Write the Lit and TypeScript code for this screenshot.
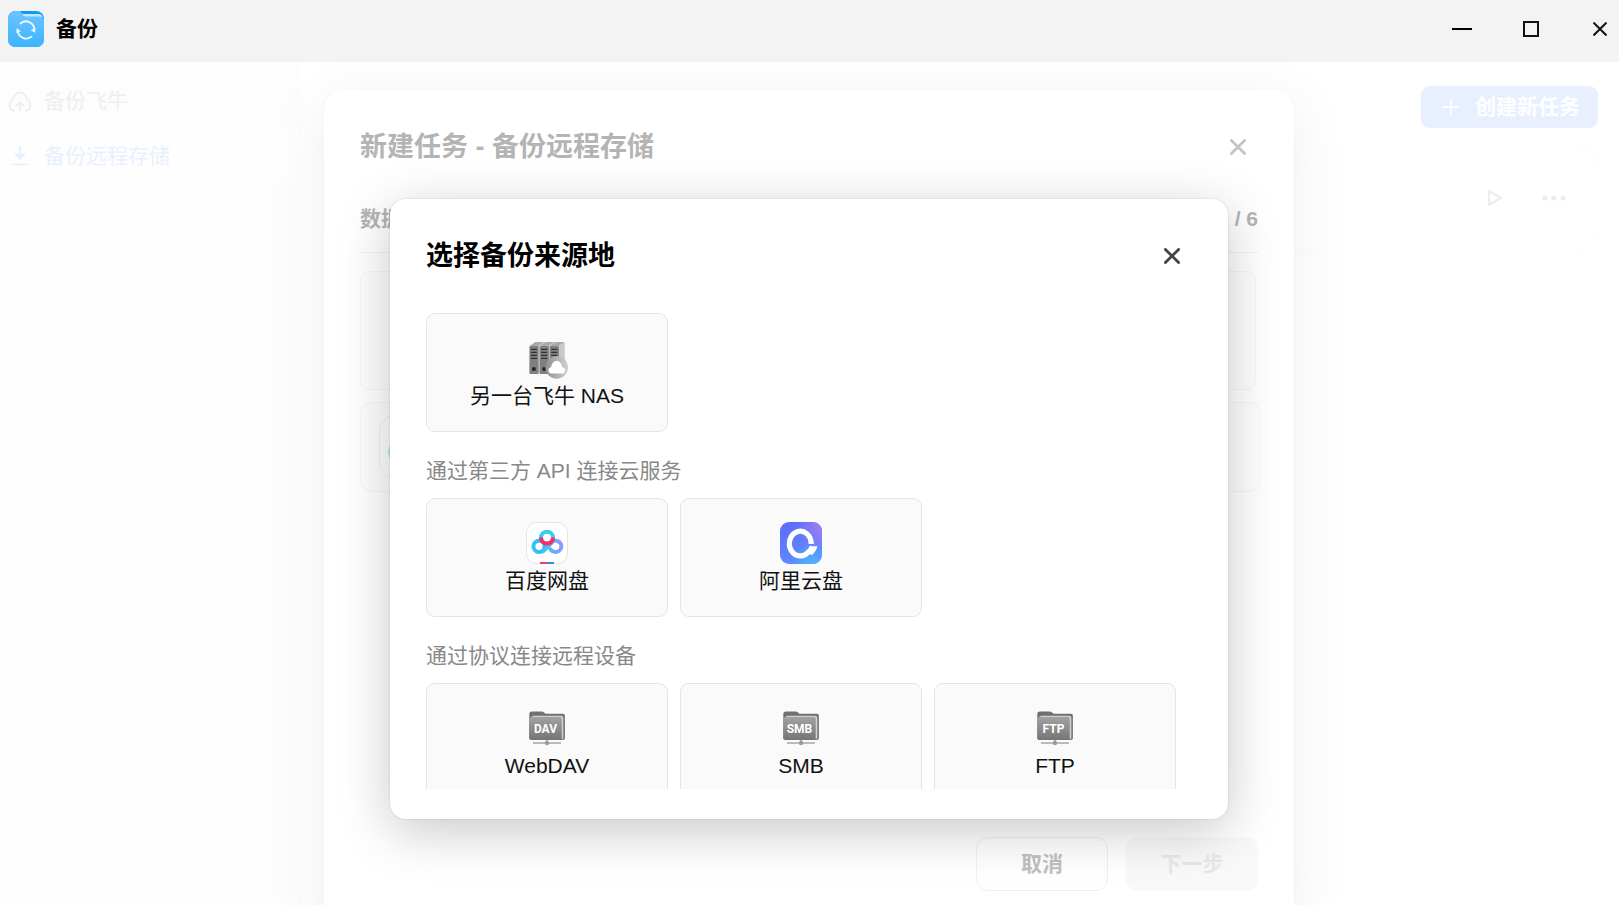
import { LitElement, html, svg, css } from "lit";
import { customElement, property } from "lit/decorators.js";

const closeIcon = html`<svg viewBox="0 0 16 16" width="16" height="16" aria-hidden="true">
  <path d="M1.4 1.4 14.6 14.6M14.6 1.4 1.4 14.6" fill="none" stroke="currentColor" stroke-width="2.8" stroke-linecap="round" />
</svg>`;

const nasServer = (x: number) => svg`
  <path d="M${x} 9 L${x + 6} 5 H${x + 15} L${x + 9} 9Z" fill="#a9a9a9" />
  <path d="M${x + 9} 9 L${x + 15} 5 V33 L${x + 9} 37Z" fill="#c9c9c9" />
  <rect x=${x} y="9" width="9.2" height="28" rx="1" fill="#808080" />
  <path d="M${x + 1.5} 12.4h6M${x + 1.5} 15.4h6M${x + 1.5} 18.4h6M${x + 1.5} 21.4h6" stroke="#303030" stroke-width="1.4" />
  <circle cx=${x + 4.5} cy="32" r="2" fill="#222" />`;

const nasIcon = html`<svg viewBox="0 0 42 42" width="42" height="42" aria-hidden="true">
  <defs>
    <linearGradient id="ring" x1="0" x2="1"><stop stop-color="#8e8e8e" /><stop offset="1" stop-color="#d2d2d2" /></linearGradient>
  </defs>
  ${nasServer(3.4)}${nasServer(13.7)}${nasServer(23.8)}
  <circle cx="30.7" cy="30.3" r="11.4" fill="url(#ring)" />
  <path d="M26 36.6c-2.300 0-3.600-1.500-3.600-3.400 0-1.800 1.200-3 2.900-3.300.3-3.400 2.500-5.800 5.400-5.800s5.100 2.400 5.300 5.800c1.800.3 3 1.500 3 3.300 0 1.900-1.400 3.400-3.600 3.400z" fill="#fff" />
</svg>`;

const folderIcon = (name: string) => html`<svg viewBox="0 0 42 42" width="42" height="42" aria-hidden="true">
  <defs>
    <linearGradient id="front" x1="0" y1="0" x2="0" y2="1"><stop stop-color="#a2a2a2" /><stop offset="1" stop-color="#757575" /></linearGradient>
  </defs>
  <path d="M3.300 7q0-2.600 2.600-2.600h9.600q1.500 0 2.500 1l1.600 1.400h17.300q2 0 2 2V31q0 2-2 2H5.300q-2 0-2-2z" fill="#707070" />
  <path d="M5.600 10.500q0-1.800 1.800-1.800h27.800q2.200 0 2.200 2.200V30q0 2-1.500 2.500z" fill="#cfcfcf" />
  <path d="M3.300 12q0-2 2-2h28.600q1.800 0 1.800 2v20.800H5.300q-2 0-2-2z" fill="url(#front)" />
  <path d="M7 36h28M21 33v5" stroke="#a6a6a6" stroke-width="1.700" fill="none" />
  <circle cx="21" cy="36" r="2.200" fill="#9b9b9b" />
  <text class="tag" x="19.500" y="26" text-anchor="middle">${name}</text>
</svg>`;

const baiduIcon = html`<svg viewBox="0 0 42 42" width="42" height="42" aria-hidden="true">
  <defs>
    <linearGradient id="left" x1="0" x2="1"><stop stop-color="#2cc6fb" /><stop offset="1" stop-color="#35b4f8" /></linearGradient>
    <linearGradient id="right" x1="0" x2="1"><stop stop-color="#36c7f2" /><stop offset="1" stop-color="#8c9bff" /></linearGradient>
  </defs>
  <rect x="0.500" y="0.500" width="41" height="41" rx="10" fill="#fff" stroke="#e4e4e4" />
  <circle cx="13" cy="24.300" r="5.600" fill="none" stroke="url(#left)" stroke-width="4" />
  <path d="M24.500 27.400q2 2.600 5 2.500a5.600 5.600 0 1 0-4.600-8.400L17 29.400" fill="none" stroke="url(#right)" stroke-width="4" stroke-linecap="round" stroke-linejoin="round" />
  <circle cx="21" cy="15.700" r="6" fill="none" stroke="#38ccf6" stroke-width="4" />
  <path d="M15 15.500a6 6 0 0 0 12 0" fill="none" stroke="#fb2b68" stroke-width="4" />
  <path d="M14 41h8" stroke="#ff3569" stroke-width="2" /><path d="M21 41h7" stroke="#2b8cff" stroke-width="2" />
</svg>`;

const aliIcon = html`<svg viewBox="0 0 42 42" width="42" height="42" aria-hidden="true">
  <defs>
    <linearGradient id="base" x1="0" y1="0" x2="0.400" y2="1"><stop stop-color="#5f69f8" /><stop offset="1" stop-color="#5e8cff" /></linearGradient>
    <radialGradient id="violet" cx="1" cy="0.100" r="0.600"><stop stop-color="#a57cf0" /><stop offset="1" stop-color="#a57cf0" stop-opacity="0" /></radialGradient>
    <radialGradient id="sky" cx="0.750" cy="1" r="0.500"><stop stop-color="#4fb2ff" /><stop offset="1" stop-color="#4fb2ff" stop-opacity="0" /></radialGradient>
  </defs>
  <rect width="42" height="42" rx="9" fill="url(#base)" />
  <rect width="42" height="42" rx="9" fill="url(#violet)" />
  <rect width="42" height="42" rx="9" fill="url(#sky)" />
  <path d="M31.200 22A10.900 12.300 0 1 0 29 29" fill="none" stroke="#fff" stroke-width="5.200" />
  <path d="M29.500 23.800L32.500 24.200 37.300 24.200C36.600 28 34.500 31 31.400 33.200L26.500 28.500C28 27.300 29 25.800 29.500 23.800Z" fill="#fff" />
</svg>`;

const logoIcon = html`<svg viewBox="0 0 36 36" width="36" height="36" aria-hidden="true">
  <defs>
    <linearGradient id="logo" x1="0" y1="0" x2="0" y2="1"><stop stop-color="#6cc4ff" /><stop offset="1" stop-color="#3cb4fd" /></linearGradient>
  </defs>
  <rect width="36" height="36" rx="8" fill="#0a9bff" />
  <path d="M14 3h17q2.500 0 3.500 3v2H16z" fill="#c4e8ff" />
  <path d="M0 8q0-8 8-8h3q2 0 3 2 1 3.500 4 3.500h13q5 0 5 5V28q0 8-8 8H8q-8 0-8-8z" fill="url(#logo)" />
  <path d="M12.500 12.400a8.400 8.400 0 0 1 13.800 5.800M23.300 25.800A8.400 8.400 0 0 1 9.800 20" fill="none" stroke="#e8f7ff" stroke-width="1.900" stroke-linecap="round" />
  <path d="M22.600 19.300l4.600 2.400.2-4.800zM13 20.300l-4.200-3.200-.6 4.800z" fill="#e8f7ff" />
</svg>`;

@customElement("source-card")
export class SourceCard extends LitElement {
  @property() label = "";
  @property() kind = "";

  static styles = css`
    :host { display: block; }
    .card {
      width: 100%;
      display: flex;
      flex-direction: column;
      align-items: center;
      gap: 1px;
      box-sizing: border-box;
      padding: 23px 8px 20px;
      border: 1px solid #e5e5e5;
      border-radius: 9px;
      background: #fafafa;
      color: #111;
      font: 400 21px/31px "Liberation Sans", "Noto Sans CJK SC", sans-serif;
      cursor: pointer;
    }
    .card:hover { background: #f5f5f5; }
    svg { display: block; }
    .tag {
      font: 700 12px "Liberation Sans Narrow", "Roboto", sans-serif;
      fill: #fff;
    }
  `;

  private icon() {
    switch (this.kind) {
      case "nas": return nasIcon;
      case "baidu": return baiduIcon;
      case "ali": return aliIcon;
      default: return folderIcon(this.kind);
    }
  }

  render() {
    return html`<button class="card" type="button">${this.icon()}<span>${this.label}</span></button>`;
  }
}

const groups = [
  { title: "", items: [{ label: "另一台飞牛 NAS", kind: "nas" }] },
  {
    title: "通过第三方 API 连接云服务",
    items: [{ label: "百度网盘", kind: "baidu" }, { label: "阿里云盘", kind: "ali" }],
  },
  {
    title: "通过协议连接远程设备",
    items: [{ label: "WebDAV", kind: "DAV" }, { label: "SMB", kind: "SMB" }, { label: "FTP", kind: "FTP" }],
  },
];

@customElement("app-root")
export class AppRoot extends LitElement {
  static styles = css`
    :host {
      display: flex;
      flex-direction: column;
      height: 100vh;
      overflow: hidden;
      background: #fff;
      color: #000;
      font: 400 21px/32px "Liberation Sans", "Noto Sans CJK SC", sans-serif;
    }
    h1, h2, h3 { margin: 0; }
    button { font: inherit; color: inherit; border: 0; background: none; padding: 0; cursor: pointer; }
    svg { display: block; }

    .titlebar {
      display: flex;
      align-items: center;
      gap: 12px;
      height: 62px;
      padding: 0 7px 4px 8px;
      box-sizing: border-box;
      background: #f3f3f3;
    }
    .titlebar h1 { flex: 1; font-size: 21px; font-weight: 700; }
    .controls { display: flex; gap: 45px; }
    .controls button { width: 24px; height: 24px; display: grid; place-items: center; }

    .workspace { position: relative; flex: 1; min-height: 0; display: flex; overflow: hidden; }
    .sidebar {
      flex: 0 0 302px;
      display: flex;
      flex-direction: column;
      gap: 1px;
      padding-top: 12px;
      background: #fdfdfd;
      box-sizing: border-box;
    }
    .link {
      display: flex;
      align-items: center;
      gap: 12px;
      height: 54px;
      padding-left: 8px;
      border-radius: 0 9px 9px 0;
      color: #eee;
      text-decoration: none;
    }
    .link.active { color: #e8f0ff; background: #fefefe; }
    .content { flex: 1; padding: 24px 21px 0; }
    .toolbar { display: flex; justify-content: flex-end; }
    .create {
      display: flex;
      align-items: center;
      gap: 16px;
      height: 42px;
      padding: 0 18px 0 22px;
      border-radius: 9px;
      background: #e8f0ff;
      color: #fff;
      font-weight: 700;
    }
    .task {
      display: flex;
      align-items: center;
      justify-content: flex-end;
      gap: 39px;
      height: 104px;
      margin-top: 18px;
      padding-right: 31px;
      box-sizing: border-box;
      border: 1px solid #fdfdfd;
      border-radius: 18px;
      color: #ededed;
    }

    .layer {
      position: absolute;
      inset: 0;
      display: flex;
      justify-content: center;
      align-items: flex-start;
      padding-right: 1px;
    }
    .wizard-layer { padding-top: 28px; }
    .picker-layer { padding-top: 137px; }
    .head { display: flex; align-items: center; justify-content: space-between; }
    .head h2 { font-size: 27px; line-height: 40px; font-weight: 700; }
    .head button { width: 40px; height: 40px; display: grid; place-items: center; }

    .wizard {
      display: flex;
      flex-direction: column;
      width: 970px;
      max-width: 94%;
      height: 837px;
      padding: 37px 36px 36px;
      box-sizing: border-box;
      border-radius: 18px;
      background: #fff;
      color: #b4b4b4;
      box-shadow: 0 0 1px rgba(0, 0, 0, 0.1), 0 12px 60px rgba(0, 0, 0, 0.07);
    }
    .wizard .head button { color: #c4c4c4; }
    .step {
      display: flex;
      justify-content: space-between;
      margin-top: 36px;
      padding-bottom: 17px;
      border-bottom: 1px solid #f2f2f2;
      font-weight: 700;
    }
    .panels { flex: 1; margin: 18px -3px 0 0; }
    .panel { height: 119px; margin-right: 5px; box-sizing: border-box; border: 1px solid #f6f6f6; border-radius: 9px; background: #fefefe; }
    .account {
      display: flex;
      align-items: center;
      height: 90px;
      margin-top: 12px;
      padding-left: 18px;
      box-sizing: border-box;
      border: 1px solid #f6f6f6;
      border-radius: 12px;
      background: #fefefe;
    }
    .avatar {
      width: 64px;
      height: 64px;
      box-sizing: border-box;
      border: 1px solid #f2f2f2;
      border-radius: 16px;
      display: grid;
      place-items: center;
    }
    .actions { display: flex; justify-content: flex-end; gap: 18px; }
    .actions button { width: 132px; height: 54px; border-radius: 12px; font-weight: 700; }
    .actions .cancel { border: 1px solid #efefef; color: #c0c0c0; }
    .actions .next { background: #f9f9f9; color: #e8e8e8; }

    .picker {
      display: flex;
      flex-direction: column;
      width: 838px;
      max-width: 90%;
      height: 620px;
      padding-bottom: 30px;
      box-sizing: border-box;
      border-radius: 16px;
      background: #fff;
      box-shadow: 0 0 1px 1px rgba(0, 0, 0, 0.05), 0 12px 52px rgba(0, 0, 0, 0.22);
    }
    .picker .head { padding: 37px 36px; }
    .picker .head button { color: #444; }
    .sources { flex: 1; min-height: 0; overflow: hidden; padding: 0 52px 0 36px; }
    .group-title { margin: 25px 0 13px; font-size: 21px; line-height: 28px; font-weight: 400; color: #888; }
    .grid { display: grid; grid-template-columns: repeat(3, 1fr); gap: 12px; }
  `;

  render() {
    return html`
      <header class="titlebar">
        ${logoIcon}
        <h1>备份</h1>
        <div class="controls">
          <button type="button" aria-label="最小化">
            <svg width="20" height="20" viewBox="0 0 20 20"><path d="M0 10h20" stroke="#000" stroke-width="2" /></svg>
          </button>
          <button type="button" aria-label="最大化">
            <svg width="16" height="16" viewBox="0 0 16 16"><rect x="1" y="1" width="14" height="14" fill="none" stroke="#111" stroke-width="2" /></svg>
          </button>
          <button type="button" aria-label="关闭">
            <svg width="14" height="14" viewBox="0 0 14 14"><path d="M.5.500 13.500 13.500M13.500.500.500 13.500" stroke="#111" stroke-width="2" /></svg>
          </button>
        </div>
      </header>
      <main class="workspace">
        <nav class="sidebar">
          <a class="link" href="#local">
            <svg width="24" height="24" viewBox="0 0 24 24" fill="none" stroke="currentColor" stroke-width="2" stroke-linecap="round" stroke-linejoin="round">
              <path d="M6 21.500C3 21 1.500 18.700 1.500 16.200c0-2.400 1.400-4.400 3.500-5.200C5.300 6.600 8 3.500 12 3.500s6.700 3.100 7 7.500c2.100.8 3.500 2.800 3.500 5.200 0 2.500-1.500 4.800-4.500 5.300M12 21.500v-8M8.300 16.800l3.700-3.500 3.700 3.500" />
            </svg>
            <span>备份飞牛</span>
          </a>
          <a class="link active" href="#remote">
            <svg width="24" height="24" viewBox="0 0 24 24">
              <path d="M12 2v11M4 20.500h16" fill="none" stroke="currentColor" stroke-width="2" />
              <path d="M5.500 9.500h13L12 16.500z" fill="currentColor" />
            </svg>
            <span>备份远程存储</span>
          </a>
        </nav>
        <section class="content">
          <div class="toolbar">
            <button class="create" type="button">
              <svg width="16" height="16" viewBox="0 0 16 16"><path d="M8 0v16M0 8h16" stroke="#fff" stroke-width="1.800" /></svg>
              <span>创建新任务</span>
            </button>
          </div>
          <div class="task">
            <button type="button" aria-label="开始">
              <svg width="16" height="18" viewBox="0 0 16 18"><path d="M2.200 2v14L13.800 9z" fill="none" stroke="currentColor" stroke-width="2.200" stroke-linejoin="round" /></svg>
            </button>
            <button type="button" aria-label="更多">
              <svg width="24" height="6" viewBox="0 0 24 6" fill="currentColor"><circle cx="3" cy="3" r="2.600" /><circle cx="12" cy="3" r="2.600" /><circle cx="21" cy="3" r="2.600" /></svg>
            </button>
          </div>
        </section>

        <div class="layer wizard-layer">
          <section class="wizard">
            <div class="head">
              <h2>新建任务 - 备份远程存储</h2>
              <button type="button" aria-label="关闭">${closeIcon}</button>
            </div>
            <div class="step"><span>数据</span><span>/ 6</span></div>
            <div class="panels">
              <div class="panel"></div>
              <div class="account">
                <div class="avatar">
                  <svg width="46" height="46" viewBox="0 0 46 46"><circle cx="11" cy="28" r="7" fill="none" stroke="#b5eaf2" stroke-width="8" /></svg>
                </div>
              </div>
            </div>
            <div class="actions">
              <button class="cancel" type="button">取消</button>
              <button class="next" type="button">下一步</button>
            </div>
          </section>
        </div>

        <div class="layer picker-layer">
          <section class="picker" role="dialog" aria-labelledby="picker-title">
            <div class="head">
              <h2 id="picker-title">选择备份来源地</h2>
              <button type="button" aria-label="关闭">${closeIcon}</button>
            </div>
            <div class="sources">
              ${groups.map((g) => html`
                ${g.title ? html`<h3 class="group-title">${g.title}</h3>` : ""}
                <div class="grid">
                  ${g.items.map((i) => html`<source-card .label=${i.label} .kind=${i.kind}></source-card>`)}
                </div>
              `)}
            </div>
          </section>
        </div>
      </main>
    `;
  }
}
